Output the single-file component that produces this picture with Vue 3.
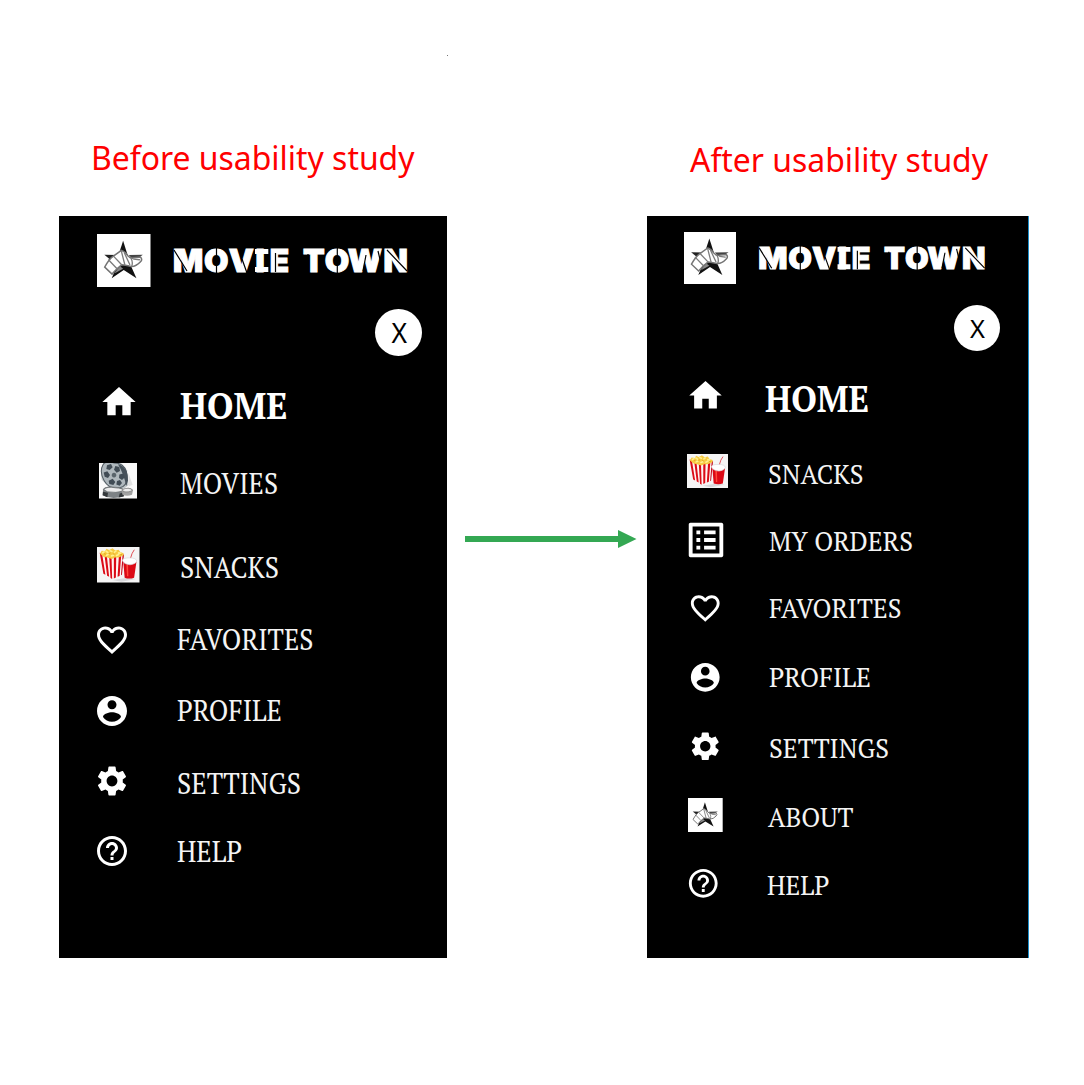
<script setup>
import { h } from 'vue'

const paths = {
  home: 'M10 20v-6h4v6h5v-8h3L12 3 2 12h3v8z',
  heart: 'M16.5 3c-1.74 0-3.41.81-4.5 2.09C10.91 3.81 9.24 3 7.5 3 4.42 3 2 5.42 2 8.5c0 3.78 3.4 6.86 8.55 11.54L12 21.35l1.45-1.32C18.6 15.36 22 12.28 22 8.5 22 5.42 19.58 3 16.5 3zm-4.4 15.55l-.1.1-.1-.1C7.14 14.24 4 11.39 4 8.5 4 6.5 5.5 5 7.5 5c1.54 0 3.04.99 3.57 2.36h1.87C13.46 5.99 14.96 5 16.5 5c2 0 3.5 1.5 3.5 3.5 0 2.89-3.14 5.74-7.9 10.05z',
  profile: 'M12 2C6.48 2 2 6.48 2 12s4.480 10 10 10 10-4.480 10-10S17.520 2 12 2zm0 2.750c1.660 0 3 1.340 3 3s-1.340 3-3 3-3-1.340-3-3 1.340-3 3-3zm0 14.450c-2.500 0-4.710-1.280-6-3.220.030-1.990 4-3.080 6-3.080 1.990 0 5.970 1.090 6 3.080-1.290 1.940-3.500 3.220-6 3.220z',
  settings: 'M19.14 12.94c.04-.3.06-.61.06-.94 0-.32-.02-.64-.07-.94l2.03-1.58c.18-.14.23-.41.12-.61l-1.92-3.32c-.12-.22-.37-.29-.59-.22l-2.39.96c-.5-.38-1.03-.7-1.62-.94l-.36-2.54c-.04-.24-.24-.41-.48-.41h-3.84c-.24 0-.43.17-.47.41l-.36 2.54c-.59.24-1.13.57-1.62.94l-2.39-.96c-.22-.08-.47 0-.59.22L2.74 8.87c-.12.21-.08.47.12.61l2.03 1.58c-.05.3-.09.63-.09.94s.02.64.07.94l-2.03 1.58c-.18.14-.23.41-.12.61l1.92 3.32c.12.22.37.29.59.22l2.39-.96c.5.38 1.03.7 1.62.94l.36 2.54c.05.24.24.41.48.41h3.84c.24 0 .44-.17.47-.41l.36-2.54c.59-.24 1.13-.56 1.62-.94l2.39.96c.22.08.47 0 .59-.22l1.92-3.32c.12-.22.07-.47-.12-.61l-2.01-1.58zM12 15.6c-1.98 0-3.6-1.62-3.6-3.6s1.62-3.6 3.6-3.6 3.6 1.62 3.6 3.6-1.62 3.6-3.6 3.6z',
  help: 'M11 18h2v-2h-2v2zm1-16C6.48 2 2 6.48 2 12s4.48 10 10 10 10-4.48 10-10S17.52 2 12 2zm0 18c-4.41 0-8-3.59-8-8s3.59-8 8-8 8 3.59 8 8-3.59 8-8 8zm0-14c-2.21 0-4 1.79-4 4h2c0-1.1.9-2 2-2s2 .9 2 2c0 2-3 1.75-3 5h2c0-2.25 3-2.5 3-5 0-2.21-1.79-4-4-4z',
  list: 'M19 5v14H5V5h14m1.1-2H3.9c-.5 0-.9.4-.9.9v16.2c0 .4.4.9.9.9h16.2c.4 0 .9-.5.9-.9V3.9c0-.5-.5-.9-.9-.9zM11 7h6v2h-6V7zm0 4h6v2h-6v-2zm0 4h6v2h-6zM7 7h2v2H7zm0 4h2v2H7zm0 4h2v2H7z'
}

const p = (d, fill, extra = {}) => h('path', { d, fill, ...extra })
const line = (d, stroke, w) => p(d, 'none', { stroke, 'stroke-width': w, 'stroke-linecap': 'round' })

const starArt = () => [
  p('M0 0H160V160H0z', '#fff'),
  p('M78 20L92 64H64z', '#111'),
  p('M22 62L62 63 48 84z', '#222'),
  p('M137 62L95 63 104 73 126 70z', '#444'),
  p('M66 92Q82 86 101 94L118 132 80 108 44 132 56 104z', '#111'),
  p('M52 118L78 104 68 96z', '#888'),
  p('M23 99Q37 74 48 67L73 49Q84 52 92 65Q101 75 111 71L130 69Q137 76 130 83Q116 98 102 97Q82 92 74 92L59 105 45 120z', '#fff', { stroke: '#747474', 'stroke-width': 4.5 }),
  line('M35 78L60 104M50 67L73 91M73 52L83 91M82 57L98 91M102 73Q108 84 104 96M110 75L127 77', '#7c7c7c', 4)
]

const popcornArt = () => [
  p('M0 0H126V104H0z', '#f5f5f5'),
  p('M20 92L47 97 91 90 116 94 73 102z', '#d9d9dc'),
  p('M8 17L42 29 79 21 72 84 43 94 19 78z', '#fff5f3'),
  p('M8 17L15 19 25 81 19 78zM22 22L29 25 36 87 30 84zM36 27L43 29 45 94 40 91zM50 28L57 26 56 89 50 92zM65 24L72 22 67 85 61 87z', '#db0b17'),
  p('M76 22L80 22 74 81 71 83z', '#c4091b'),
  p('M9 20L14 11 24 12 28 5 36 9 46 4 54 10 64 8 69 15 79 18 78 25 64 31 53 31 44 35 31 31 20 29z', '#f7ca43'),
  line('M17 17l4-3M27 12l5 4M39 11l5 2M52 15l4-3M64 17l6 1M28 24l5-2M43 26l6-2M58 25l6-3', '#fff08d', 5),
  line('M22 20l3 1M36 19l3-1M48 20l3 2M69 23l4-1', '#d99512', 2),
  line('M98 37L104 19 110 9', '#df424a', 2.8),
  p('M78 43L117 43 110 90Q96 95 82 90z', '#dc0915'),
  p('M87 52L92 52 93 86 89 86z', '#ff493b'),
  p('M75 39Q78 31 98 32Q116 32 118 41Q115 50 98 52Q80 51 75 39z', '#fff', { stroke: '#d8d8dc', 'stroke-width': 2 })
]

const reelArt = () => [
  p('M0 0H114V106H0z', '#fafafa'),
  p('M14 0H66L84 22 89 66 76 76H35L8 50 6 17z', '#c3c9cb'),
  p('M46 0Q83 0 84 42Q85 70 62 74Q31 80 16 54Q0 26 12 5Q20-8 46 0z', '#aeb7bc', { stroke: '#505a61', 'stroke-width': 3 }),
  p('M63 5Q88 16 87 52L82 69Q73 30 57 4z', '#46515a'),
  p('M24 7l12-4 5 10-9 8-10-3zM49 9l12 3 2 12-10 5-8-9zM14 28l11-3 8 11-6 9-10-4zM61 34l12-3 4 12-8 8-9-6zM29 53l12-6 8 10-6 9-12-3zM54 54l9-3 6 9-7 8-10-4z', '#414c55'),
  p('M45 29a7 7 0 1 0 .1 0z', '#59646b'),
  p('M12 79Q15 68 48 71Q77 74 77 82L74 99Q38 111 11 96z', '#7d8285'),
  p('M14 79Q24 69 49 74Q72 75 75 83Q51 91 25 86z', '#ececec', { stroke: '#585e61', 'stroke-width': 2 }),
  p('M12 86L27 89 25 102 11 96zM62 91L76 87 74 100 59 103z', '#34383b'),
  p('M68 80Q92 67 102 81L99 95Q82 101 70 94z', '#a2a2a2'),
  p('M71 79Q89 71 101 81Q90 89 72 85z', '#eee', { stroke: '#777', 'stroke-width': 2 }),
  p('M88 30L101 65 89 70z', '#e2e2e2')
]

const art = {
  star: { view: '0 0 160 160', draw: starArt },
  popcorn: { view: '0 0 126 104', draw: popcornArt },
  reel: { view: '0 0 114 106', draw: reelArt }
}

const Glyph = ({ name }) => {
  const a = art[name]
  return h('svg', { viewBox: a ? a.view : '0 0 24 24', preserveAspectRatio: 'none', width: '100%', height: '100%', style: 'display:block' },
    a ? a.draw() : [p(paths[name], '#fff')])
}
Glyph.props = ['name']

// icon: [left, top, width, height] inside the row; label: [left, width]
const panels = [
  {
    id: 'before', title: 'Before usability study', titleWidth: 323.5, size: 28.2, homeSize: 36.5,
    rows: [
      { text: 'HOME', name: 'home', height: 75, icon: [40.2, -3, 40, 40], label: [121, 107.5] },
      { text: 'MOVIES', name: 'reel', height: 84, icon: [39.5, 3.5, 38, 35.5], label: [121, 98] },
      { text: 'SNACKS', name: 'popcorn', height: 72, icon: [38, 3.5, 42.5, 35.5], label: [120.7, 99] },
      { text: 'FAVORITES', name: 'heart', height: 71, icon: [35, 6.5, 36, 36], label: [118, 136.5] },
      { text: 'PROFILE', name: 'profile', height: 73, icon: [35, 6.2, 36, 36], label: [118, 105] },
      { text: 'SETTINGS', name: 'settings', height: 68, icon: [35, 3.6, 36, 36], label: [118, 124] },
      { text: 'HELP', name: 'help', height: 60, icon: [35, 5.2, 36, 36], label: [118, 65] }
    ]
  },
  {
    id: 'after', title: 'After usability study', titleWidth: 298, size: 27.4, homeSize: 36,
    rows: [
      { text: 'HOME', name: 'home', height: 71.5, icon: [39.3, -2.5, 39, 39], label: [118, 104] },
      { text: 'SNACKS', name: 'popcorn', height: 67.5, icon: [40, 4.5, 41, 34], label: [120.5, 95.5] },
      { text: 'MY ORDERS', name: 'list', height: 67.3, icon: [35.5, 0, 46, 46], label: [122, 144] },
      { text: 'FAVORITES', name: 'heart', height: 68.7, icon: [41.3, 7.2, 34.5, 34.5], label: [122, 132.5] },
      { text: 'PROFILE', name: 'profile', height: 71.5, icon: [41.3, 7, 34.5, 34.5], label: [122, 102] },
      { text: 'SETTINGS', name: 'settings', height: 69, icon: [41.3, 4.3, 34.5, 34.5], label: [122, 120] },
      { text: 'ABOUT', name: 'star', height: 67.4, icon: [41.3, 4.2, 34.7, 34.7], label: [120.7, 85.5] },
      { text: 'HELP', name: 'help', height: 60, icon: [38.5, 5.5, 34.5, 34.5], label: [119.5, 62.5] }
    ]
  }
]

const iconStyle = ({ icon: [x, y, w, ht] }) => ({ marginLeft: `${x}px`, marginTop: `${y}px`, width: `${w}px`, height: `${ht}px` })
const labelStyle = ({ icon, label }) => ({ marginLeft: `${label[0] - icon[0] - icon[2]}px`, width: `${label[1]}px` })
</script>

<template>
  <main class="board">
    <i class="speck"></i>
    <section v-for="panel in panels" :key="panel.id" class="column" :class="panel.id">
      <h1 class="title">
        <svg :width="panel.titleWidth + 4" height="48">
          <text x="0" y="35.6" :textLength="panel.titleWidth" lengthAdjust="spacingAndGlyphs">{{ panel.title }}</text>
        </svg>
      </h1>
      <div class="phone">
        <header class="brand">
          <div class="logo"><Glyph name="star" /></div>
          <svg class="wordmark" viewBox="0 0 236 28">
            <text class="brand-text" y="25" x="-1 30 54.7 81.5 95.8 120 129 150.800 173.800 209.600">MOVIE TOWN</text>
            <path class="slab" d="M81 2h13.300v5H81zM81 20h13.300v5H81z" />
            <path class="cut" d="M0 3L13 24M42.500 0v9M42.500 18v9M68 12L73 26M101.500 6v19M134 7v19M163.300 0v9M163.300 18v9M192 8L189 24M204 4L209 25M213 3L233 24" />
          </svg>
        </header>
        <div class="close-row"><button class="close">X</button></div>
        <nav class="menu">
          <a v-for="row in panel.rows" :key="row.text" class="row" :style="{ height: row.height + 'px' }">
            <span class="icon" :style="iconStyle(row)"><Glyph :name="row.name" /></span>
            <svg class="label" :style="labelStyle(row)" height="42">
              <text x="0" y="33.6" :class="{ strong: row.text === 'HOME' }"
                :font-size="row.text === 'HOME' ? panel.homeSize : panel.size"
                :textLength="row.label[1]" lengthAdjust="spacingAndGlyphs">{{ row.text }}</text>
            </svg>
          </a>
        </nav>
      </div>
    </section>
    <svg class="arrow" width="172" height="20" viewBox="0 0 172 20">
      <path d="M0 7H153V1L171.500 10 153 19V13H0z" fill="#34a853" />
    </svg>
  </main>
</template>

<style>
body { margin: 0; background: #fff; }
</style>

<style scoped>
.board {
  position: relative;
  display: flex;
  align-items: flex-start;
  box-sizing: border-box;
  width: 1084px;
  height: 1085px;
  padding: 134px 0 0 59px;
  background: #fff;
}
.speck { position: absolute; left: 447px; top: 55px; width: 1px; height: 1px; background: #777; }
.before { order: 1; width: 388px; }
.arrow { order: 2; flex: none; margin: 395px 10px 0 18px; }
.after { order: 3; width: 382px; }
.title { height: 82px; margin: 0; padding-left: 32px; box-sizing: border-box; font-weight: 400; }
.after .title { padding: 2px 0 0 42.500px; }
.title svg { display: block; overflow: visible; }
.title text { font: 400 32px "Noto Sans", sans-serif; fill: #f00; }
.phone { height: 742px; box-sizing: border-box; background: #000; }
.after .phone { border-right: 1px solid #1c8ecb; }
.brand { display: flex; align-items: flex-start; height: 92.500px; box-sizing: border-box; padding: 17.500px 0 0 38px; }
.after .brand { height: 88.500px; padding: 15.500px 0 0 37px; }
.logo { width: 53.500px; height: 53.500px; }
.after .logo { width: 52px; height: 52px; }
.wordmark { width: 236px; height: 28px; margin: 13.500px 0 0 23.500px; overflow: visible; }
.after .wordmark { width: 228.700px; height: 27.100px; margin: 13.500px 0 0 23px; }
.brand-text { font: 900 31.600px Inter, sans-serif; fill: #fff; stroke: #fff; stroke-width: 1; }
.slab { fill: #fff; }
.cut { stroke: #000; stroke-width: 1.2; fill: none; }
.close-row { display: flex; justify-content: flex-end; height: 76px; padding-right: 25px; }
.after .close-row { height: 73.500px; padding-right: 28.500px; }
.close {
  width: 47.500px; height: 47.500px; padding: 0 0 0 2px; border: 0; border-radius: 50%;
  background: #fff; color: #000; font: 400 26.500px/49px "Noto Sans", sans-serif;
}
.after .close { width: 46px; height: 46px; font-size: 25.500px; line-height: 46px; }
.menu { display: flex; flex-direction: column; }
.row { display: flex; align-items: flex-start; flex: none; }
.icon { display: block; flex: none; }
.label { display: block; flex: none; overflow: visible; }
.label text { font-family: "PT Serif", "Liberation Serif", serif; fill: #f4f4f4; }
.label .strong { font-weight: 700; fill: #fff; }
</style>
